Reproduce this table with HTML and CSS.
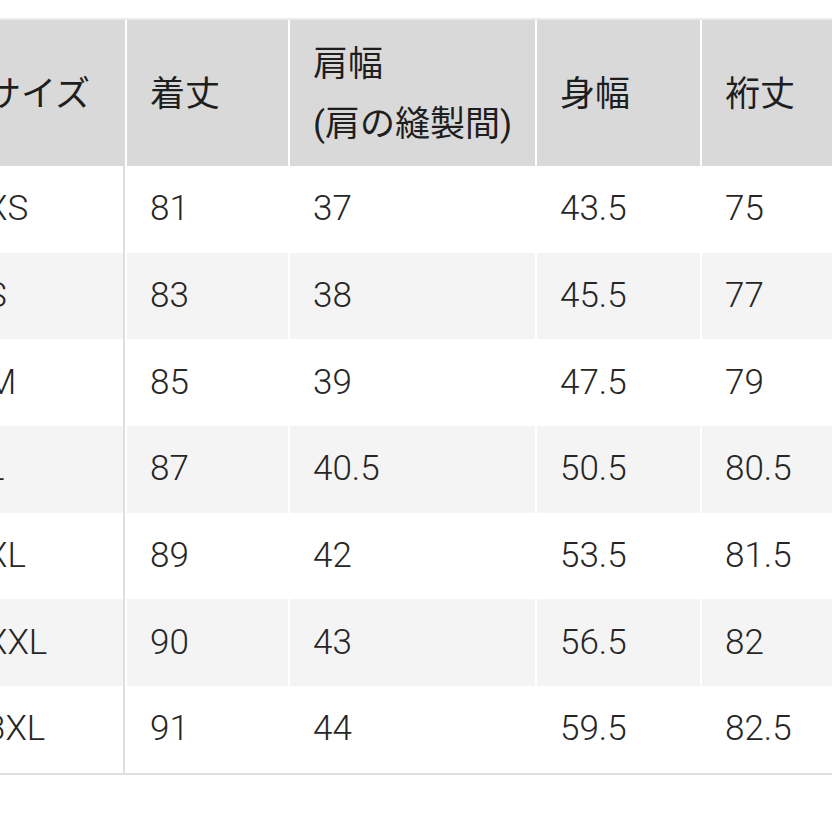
FILE: index.html
```html
<!DOCTYPE html>
<html lang="ja">
<head>
<meta charset="utf-8">
<link rel="stylesheet" href="styles.css">
</head>
<body>
<div class="page">
  <table class="sizes">
    <colgroup>
      <col class="c1"><col class="c2"><col class="c3"><col class="c4"><col class="c5">
    </colgroup>
    <thead>
      <tr>
        <th>サイズ</th>
        <th>着丈</th>
        <th class="two">肩幅<br>(肩の縫製間)</th>
        <th>身幅</th>
        <th>裄丈</th>
      </tr>
    </thead>
    <tbody>
      <tr><td>XS</td><td>81</td><td>37</td><td>43.5</td><td>75</td></tr>
      <tr><td>S</td><td>83</td><td>38</td><td>45.5</td><td>77</td></tr>
      <tr><td>M</td><td>85</td><td>39</td><td>47.5</td><td>79</td></tr>
      <tr><td>L</td><td>87</td><td>40.5</td><td>50.5</td><td>80.5</td></tr>
      <tr><td>XL</td><td>89</td><td>42</td><td>53.5</td><td>81.5</td></tr>
      <tr><td>XXL</td><td>90</td><td>43</td><td>56.5</td><td>82</td></tr>
      <tr><td>3XL</td><td>91</td><td>44</td><td>59.5</td><td>82.5</td></tr>
    </tbody>
  </table>
</div>
</body>
</html>
```

FILE: styles.css
```css
html, body {
  margin: 0;
  padding: 0;
  background: #ffffff;
}

.page {
  width: 832px;
  height: 832px;
  overflow: hidden;
  padding-top: 18px;
  box-sizing: border-box;
}

.sizes {
  margin-left: -39px;
  border-collapse: separate;
  border-spacing: 2px 0;
  table-layout: fixed;
  width: 887px;
  font-family: Roboto, "Noto Sans CJK JP", sans-serif;
  font-size: 35px;
  color: #262626;
  border-top: 2px solid #ececec;
  border-bottom: 2px solid #dedede;
}

.c1 { width: 162px; }
.c2 { width: 161px; }
.c3 { width: 245px; }
.c4 { width: 163px; }
.c5 { width: 150px; }

.sizes th {
  background: #d9d9d9;
  height: 146px;
  padding: 4px 0 0 23px;
  box-sizing: border-box;
  text-align: left;
  vertical-align: middle;
  font-weight: 400;
  line-height: 60px;
  color: #1e1e1e;
}

.sizes td {
  height: 86.7px;
  padding: 0 0 0 23px;
  box-sizing: border-box;
  vertical-align: middle;
  font-weight: 300;
  line-height: 40px;
}

.sizes tbody tr:nth-child(even) td {
  background: #f4f4f4;
}

.sizes tbody td:first-child {
  border-right: 2px solid #dfdfdf;
}
```
